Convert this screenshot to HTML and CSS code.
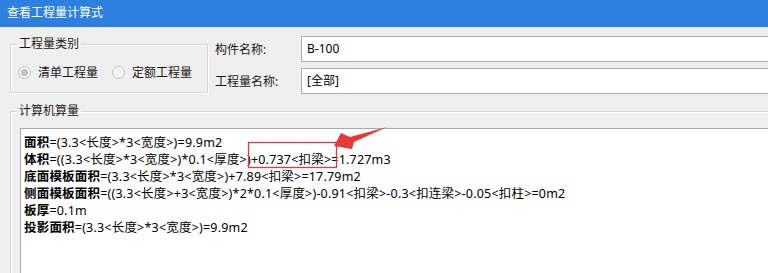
FILE: index.html
```html
<!DOCTYPE html>
<html lang="zh-CN">
<head>
<meta charset="utf-8">
<title>查看工程量计算式</title>
<link rel="stylesheet" href="styles.css">
</head>
<body>
<div class="window">
  <div class="titlebar">查看工程量计算式</div>
  <div class="body">
    <div class="top">
      <fieldset class="group type-group">
        <legend>工程量类别</legend>
        <div class="radios">
          <label class="radio"><span class="dot checked"></span>清单工程量</label>
          <label class="radio"><span class="dot"></span>定额工程量</label>
        </div>
      </fieldset>
      <div class="fields">
        <div class="field"><span class="flabel">构件名称:</span><div class="input">B-100</div></div>
        <div class="field"><span class="flabel">工程量名称:</span><div class="input">[全部]</div></div>
      </div>
    </div>
    <fieldset class="group calc-group">
      <legend>计算机算量</legend>
      <div class="textbox">
        <div class="line"><b>面积</b>=(3.3&lt;长度&gt;*3&lt;宽度&gt;)=9.9m2</div>
        <div class="line"><b>体积</b>=((3.3&lt;长度&gt;*3&lt;宽度&gt;)*0.1&lt;厚度&gt;)+0.737&lt;扣梁&gt;=1.727m3</div>
        <div class="line"><b>底面模板面积</b>=(3.3&lt;长度&gt;*3&lt;宽度&gt;)+7.89&lt;扣梁&gt;=17.79m2</div>
        <div class="line"><b>侧面模板面积</b>=((3.3&lt;长度&gt;+3&lt;宽度&gt;)*2*0.1&lt;厚度&gt;)-0.91&lt;扣梁&gt;-0.3&lt;扣连梁&gt;-0.05&lt;扣柱&gt;=0m2</div>
        <div class="line"><b>板厚</b>=0.1m</div>
        <div class="line"><b>投影面积</b>=(3.3&lt;长度&gt;*3&lt;宽度&gt;)=9.9m2</div>
      </div>
    </fieldset>
  </div>
  <svg class="annotation" width="768" height="273" viewBox="0 0 768 273">
    <rect x="248.5" y="142.5" width="88" height="25" fill="none" stroke="#e8393a" stroke-width="1.3"/>
    <polygon points="334,146 341,133 350,137 387,127 354,142 352,149" fill="#e8393a"/>
  </svg>
</div>
</body>
</html>
```
FILE: styles.css
```css
html, body {
  margin: 0;
  padding: 0;
}
body {
  width: 768px;
  height: 273px;
  overflow: hidden;
  background: #efefef;
  font-family: "Noto Sans", "Noto Sans CJK SC", sans-serif;
  font-size: 12px;
  color: #000;
}
.window {
  position: relative;
  width: 768px;
  height: 273px;
  overflow: hidden;
}
.titlebar {
  height: 27px;
  line-height: 26px;
  padding-left: 7px;
  background: #2d80e0;
  color: #fff;
  font-size: 12px;
}
.body {
  padding: 9px 0 0 10px;
}
.top {
  display: flex;
  align-items: flex-start;
}
.group {
  margin: 0;
  border: 1px solid #d6d6d6;
  box-shadow: inset 1px 1px 0 #fff, 1px 1px 0 #fff;
  min-width: 0;
}
.group legend {
  padding: 0 2px;
  line-height: 16px;
  color: #1a1a1a;
}
.type-group {
  box-sizing: border-box;
  width: 198px;
  padding: 0 6px 12px 6px;
}
.radios {
  display: flex;
  margin-top: 12px;
  height: 16px;
  align-items: center;
}
.radio {
  display: flex;
  align-items: center;
  color: #1a1a1a;
  margin-left: 1px;
}
.radio + .radio {
  margin-left: 14px;
}
.dot {
  box-sizing: border-box;
  width: 13px;
  height: 13px;
  border-radius: 50%;
  border: 1px solid #c4c4c4;
  background: #f4f4f4;
  margin-right: 7px;
  display: flex;
  align-items: center;
  justify-content: center;
}
.dot.checked::after {
  content: "";
  width: 7px;
  height: 7px;
  border-radius: 50%;
  background: #c2c2c2;
}
.fields {
  margin-left: 7px;
  display: flex;
  flex-direction: column;
  gap: 6px;
  flex: 1;
}
.field {
  display: flex;
  align-items: center;
}
.flabel {
  width: 86px;
  color: #1a1a1a;
}
.input {
  flex: 1;
  box-sizing: border-box;
  height: 26px;
  line-height: 24px;
  padding-left: 5px;
  background: #fff;
  border: 1px solid #adadad;
  border-right: none;
}
.calc-group {
  margin-top: 9px;
  width: 800px;
  padding: 0 6px 0 6px;
}
.textbox {
  margin: 9px 0 0 3px;
  height: 160px;
  background: #fff;
  border: 1px solid #a9a9a9;
  padding: 5px 0 0 3px;
}
.line {
  font-size: 12.5px;
  letter-spacing: 0.2px;
  line-height: 17px;
  white-space: nowrap;
}
.line b {
  font-weight: 700;
}
.annotation {
  position: absolute;
  left: 0;
  top: 0;
  pointer-events: none;
}
```
